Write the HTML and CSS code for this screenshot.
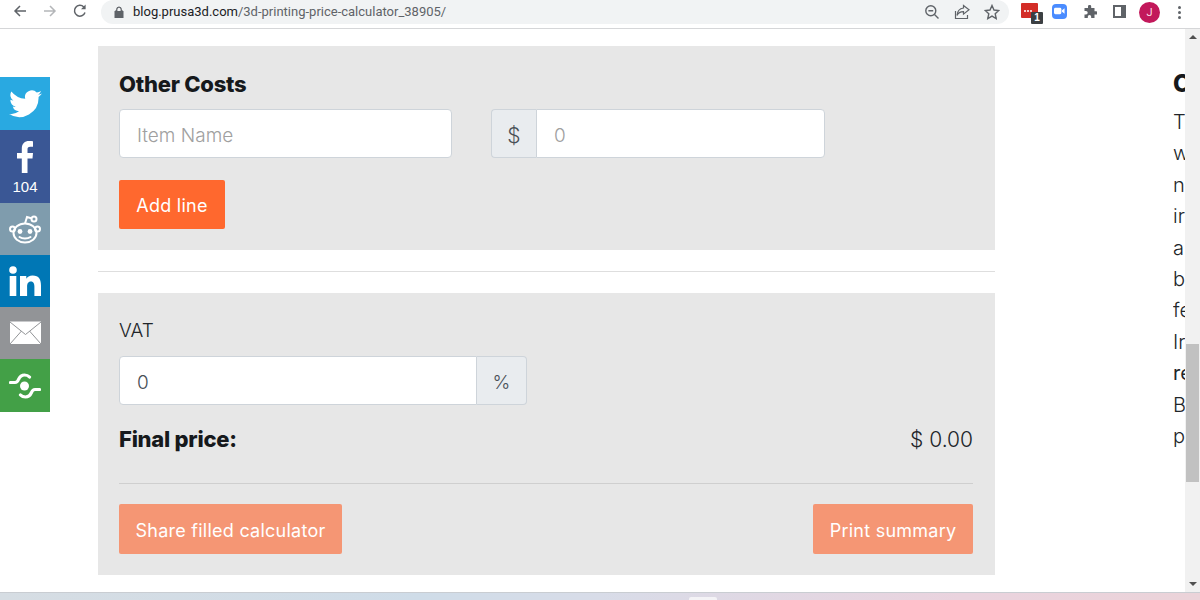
FILE: index.html
```html
<!DOCTYPE html>
<html lang="en">
<head>
<meta charset="utf-8">
<title>3D printing price calculator</title>
<link rel="stylesheet" href="styles.css">
</head>
<body>
<div class="window">
  <header class="toolbar">
    <div class="nav">
      <svg class="nav-icon" viewBox="0 0 16 16"><path d="M14 8H3M8 3 3 8l5 5" fill="none" stroke="#5f6368" stroke-width="1.5"/></svg>
      <svg class="nav-icon" viewBox="0 0 16 16"><path d="M2 8h11M8 3l5 5-5 5" fill="none" stroke="#b4b6b9" stroke-width="1.5"/></svg>
      <svg class="nav-icon" viewBox="0 0 16 16"><path d="M13 9.5A5.400 5.400 0 1 1 11.800 4" fill="none" stroke="#5f6368" stroke-width="1.5"/><path d="M13.600 1.600v4.600H9z" fill="#5f6368"/></svg>
    </div>
    <div class="omnibox">
      <svg class="lock" viewBox="0 0 10 12"><path d="M1 5h8v7H1zM2.600 5V3.400a2.400 2.400 0 0 1 4.800 0V5" fill="#5f6368" stroke="#5f6368"/><path d="M3.400 5V3.400a1.600 1.600 0 0 1 3.200 0V5z" fill="#f1f3f4"/></svg>
      <span class="url"><span class="host">blog.prusa3d.com</span>/3d-printing-price-calculator_38905/</span>
      <div class="omni-actions">
        <svg class="act" viewBox="0 0 16 16"><circle cx="6.800" cy="6.800" r="5" fill="none" stroke="#5f6368" stroke-width="1.400"/><path d="M4.400 6.800h4.800M10.500 10.500l4 4" stroke="#5f6368" stroke-width="1.400"/></svg>
        <svg class="act" viewBox="0 0 16 16"><path d="M1.500 7v7.500h12V11M9.500 1.500l5.500 4.300-5.500 4.300V7.600C6 7.600 4 9 3 11.500 3.300 7.500 5.500 4.500 9.500 4z" fill="none" stroke="#5f6368" stroke-width="1.200"/></svg>
        <svg class="act" viewBox="0 0 16 16"><path d="m8 1.500 2 4.500 4.800.5-3.600 3.200 1 4.800L8 12.100 3.800 14.500l1-4.800L1.200 6.500 6 6z" fill="none" stroke="#5f6368" stroke-width="1.400"/></svg>
      </div>
    </div>
    <div class="extensions">
      <div class="ext-pass"><i></i><i></i><i></i><span class="ext-badge">1</span></div>
      <div class="ext-zoom"><svg viewBox="0 0 12 8"><rect x="0" y="0.500" width="8" height="7" rx="1.500" fill="#fff"/><path d="m8.500 3.500 3-2.500v6l-3-2.500z" fill="#fff"/></svg></div>
      <svg class="ext-puzzle" viewBox="0 0 14 14"><path d="M5 1.500a1.600 1.600 0 0 1 3.200 0V3h3.300v3.200H13a1.700 1.700 0 0 1 0 3.400h-1.500V13H8.200v-1.300a1.700 1.700 0 0 0-3.400 0V13H1.500V9.500H3a1.700 1.700 0 0 0 0-3.400H1.500V3H5z" fill="#5f6368"/></svg>
      <div class="ext-panel"></div>
      <div class="avatar">J</div>
      <div class="kebab"><i></i><i></i><i></i></div>
    </div>
  </header>

  <div class="viewport">
    <nav class="social">
      <a class="s s-tw"><svg viewBox="0 0 24 20" width="33" height="28"><path d="M24 2.400a9.800 9.800 0 0 1-2.800.8A5 5 0 0 0 23.300.500a9.800 9.800 0 0 1-3.100 1.200 4.900 4.900 0 0 0-8.400 4.500A14 14 0 0 1 1.700.900a4.900 4.900 0 0 0 1.500 6.600 4.900 4.900 0 0 1-2.200-.6 4.900 4.900 0 0 0 3.900 4.900 4.900 4.900 0 0 1-2.200.1 4.900 4.900 0 0 0 4.600 3.400A9.900 9.900 0 0 1 0 17.300 14 14 0 0 0 21.500 4.900a10 10 0 0 0 2.500-2.500z" fill="#fff"/></svg></a>
      <a class="s s-fb"><svg viewBox="0 0 16 32" width="16" height="32"><path d="M10.500 32V17.500h5l.5-5.500h-5.500V8.500c0-1.600.5-2.700 2.800-2.700H16V.3C15.500.2 13.800 0 12 0 7.800 0 4.800 2.500 4.800 7.500V12H0v5.500h4.800V32z" fill="#fff"/></svg><span class="count">104</span></a>
      <a class="s s-rd"><svg viewBox="0 0 32 30" width="32" height="30"><g fill="none" stroke="#fff" stroke-width="2"><ellipse cx="16" cy="19" rx="11.500" ry="9.500"/><circle cx="3.500" cy="15" r="2.500"/><circle cx="28.500" cy="15" r="2.500"/><circle cx="25" cy="5" r="2.500"/><path d="M16 9.500l2-6.500 5 1.500"/><path d="M10.500 23c3 2 8 2 11 0" stroke-linecap="round"/></g><circle cx="11" cy="17.500" r="2.400" fill="#fff"/><circle cx="21" cy="17.500" r="2.400" fill="#fff"/></svg></a>
      <a class="s s-li"><svg viewBox="0 0 32 30" width="32" height="30"><g fill="#fff"><circle cx="4" cy="4" r="3.800"/><rect x="0.700" y="10" width="6.600" height="20"/><path d="M11 10h6.300v2.800c1-1.800 3.200-3.300 6.300-3.300 6.500 0 8.400 4 8.400 10V30h-6.600v-9.300c0-2.600-.6-5.300-3.500-5.300s-3.800 2.400-3.800 5.200V30H11z"/></g></svg></a>
      <a class="s s-ml"><svg viewBox="0 0 32 24" width="33" height="24"><path d="M.5.500h31V23H.5z" fill="#fff"/><path d="M0.500 1 16 13.500 31.500 1M.5 23l11.500-13M31.500 23 20 10" fill="none" stroke="#929497" stroke-width="1"/></svg></a>
      <a class="s s-mr"><svg viewBox="0 0 32 26" width="32" height="26"><circle cx="15.500" cy="13" r="4.500" fill="#fff"/><path d="M1.500 9.500h4.500c2 0 2.700-1 3.500-3 1.200-2.700 3.200-4.500 6-4.500 2.200 0 3.800.7 5 2M30.500 16.500H26c-2 0-2.700 1-3.500 3-1.200 2.700-3.200 4.500-6 4.500-2.200 0-3.800-.7-5-2" fill="none" stroke="#fff" stroke-width="3.200" stroke-linecap="round"/></svg></a>
    </nav>

    <main class="page">
      <div class="center">
        <section class="panel panel-costs">
          <h2 class="title">Other Costs</h2>
          <div class="cost-row">
            <div class="field field-name"><span class="placeholder">Item Name</span></div>
            <div class="money">
              <span class="addon addon-left">$</span>
              <div class="field field-amount"><span class="placeholder">0</span></div>
            </div>
          </div>
          <button class="btn btn-solid">Add line</button>
        </section>
        <hr class="divider">
        <section class="panel panel-total">
          <label class="label">VAT</label>
          <div class="vat">
            <div class="field field-vat"><span class="value">0</span></div>
            <span class="addon addon-right">%</span>
          </div>
          <div class="final">
            <strong class="final-label">Final price:</strong>
            <span class="final-value">$ 0.00</span>
          </div>
          <hr class="rule">
          <div class="actions">
            <button class="btn btn-muted btn-share">Share filled calculator</button>
            <button class="btn btn-muted btn-print">Print summary</button>
          </div>
        </section>
      </div>
      <aside class="article">
        <h2 class="article-title">C</h2>
        <p>T</p>
        <p>w</p>
        <p>n</p>
        <p>ir</p>
        <p>a</p>
        <p>b</p>
        <p>fe</p>
        <p>Ir</p>
        <p><b>re</b></p>
        <p>B</p>
        <p>p</p>
      </aside>
    </main>

    <div class="scrollbar">
      <span class="arrow-up"></span>
      <div class="track"><div class="thumb"></div></div>
      <span class="arrow-down"></span>
    </div>
  </div>
  <footer class="taskbar"><span class="task-tab"></span></footer>
</div>
</body>
</html>
```
FILE: styles.css
```css
* { box-sizing: border-box; }
html, body { margin: 0; height: 100%; overflow: hidden; background: #fff; }
body { font-family: Inter, "Liberation Sans", sans-serif; color: #212529; }
.window { width: 1200px; height: 600px; display: flex; flex-direction: column; }

.toolbar { height: 29px; flex: none; display: flex; align-items: flex-start; background: #fff; border-bottom: 1px solid #d5d6d8; }
.nav { width: 101px; flex: none; display: flex; gap: 14px; padding: 3px 0 0 12px; }
.nav-icon { width: 16px; height: 16px; }
.omnibox { width: 908px; height: 24px; flex: none; background: #f1f3f4; border-radius: 12px; display: flex; align-items: center; padding-left: 13px; }
.lock { width: 10px; height: 12px; flex: none; }
.url { margin-left: 9px; font: 13px/20px Roboto, "Liberation Sans", sans-serif; color: #5f6368; }
.host { color: #202124; }
.omni-actions { margin-left: auto; display: flex; gap: 14px; padding-right: 9px; align-items: center; }
.act { width: 16px; height: 16px; }
.extensions { flex: 1; display: flex; align-items: center; height: 24px; padding-left: 12px; }
.ext-pass { position: relative; width: 17px; height: 15px; background: #d32d27; border-radius: 1px; margin-top: -3px; display: flex; align-items: center; justify-content: center; gap: 1px; padding-right: 3px; }
.ext-pass i { display: block; width: 2px; height: 2px; border-radius: 50%; background: #fff; }
.ext-badge { position: absolute; left: 10px; top: 9px; width: 12px; height: 12px; background: #3c4043; border-radius: 1px; color: #fff; font: 700 10px/12px "Liberation Sans", sans-serif; text-align: center; }
.ext-zoom { width: 15px; height: 15px; margin-left: 14px; margin-top: -2px; background: #4a8cff; border-radius: 4px; display: flex; align-items: center; justify-content: center; }
.ext-zoom svg { width: 11px; height: 8px; }
.ext-puzzle { width: 14px; height: 14px; margin-left: 16px; margin-top: -1px; }
.ext-panel { width: 13px; height: 13px; margin-left: 16px; margin-top: -1px; border: 2px solid #5f6368; border-right-width: 5px; }
.avatar { width: 21px; height: 21px; margin-left: 13px; border-radius: 50%; background: #c2185b; color: #fbdde8; font: 11px/21px Roboto, sans-serif; text-align: center; }
.kebab { margin-left: 18px; display: flex; flex-direction: column; gap: 2px; }
.kebab i { display: block; width: 3px; height: 3px; border-radius: 50%; background: #5f6368; }

.viewport { flex: 1; min-height: 0; display: flex; position: relative; }
.page { flex: 1; min-width: 0; display: flex; overflow: hidden; padding-top: 17px; }
.center { width: 897px; margin-left: 98px; flex: none; }
.panel { background: #e7e7e7; padding: 0 22px 0 21px; }
.panel-costs { height: 204px; padding-top: 25px; }
.title { margin: 0; font-size: 22px; line-height: 27px; font-weight: 800; color: #16191c; letter-spacing: -.25px; }
.cost-row { display: flex; margin-top: 11px; gap: 39px; }
.field { height: 49px; background: #fff; border: 1px solid #ced4da; border-radius: 4px; display: flex; align-items: center; padding: 4px 0 0 17px; font-size: 19px; font-weight: 300; }
.field-name { width: 333px; }
.placeholder { color: #a0a0a0; }
.value { color: #495057; }
.money { display: flex; }
.addon { display: flex; align-items: center; justify-content: center; height: 49px; padding-top: 3px; background: #e9ecef; border: 1px solid #ced4da; font-size: 19px; font-weight: 300; color: #495057; }
.addon-left { width: 45px; border-radius: 4px 0 0 4px; border-right: 0; font-size: 21px; }
.field-amount { width: 288.5px; border-radius: 0 4px 4px 0; }
.btn { border: 0; color: #fff; font-family: inherit; font-size: 18px; letter-spacing: .25px; height: 50px; border-radius: 2px; padding: 3px 0 0; display: block; }
.btn-solid { margin-top: 22px; width: 106px; height: 49px; background: #ff682e; padding-top: 1px; }
.divider { margin: 21px 0 21px; border: 0; border-top: 1px solid #dedede; }
.panel-total { height: 282px; padding-top: 26px; }
.label { display: block; font-size: 19px; font-weight: 300; line-height: 24px; color: #212529; }
.vat { display: flex; margin-top: 13px; }
.field-vat { width: 358px; border-radius: 4px 0 0 4px; }
.addon-right { width: 50px; border-radius: 0 4px 4px 0; border-left: 0; }
.final { display: flex; justify-content: space-between; align-items: center; margin-top: 20px; height: 28px; }
.final-label { font-size: 22px; font-weight: 800; color: #16191c; letter-spacing: -.25px; }
.final-value { font-size: 21px; font-weight: 300; color: #212529; }
.rule { margin: 30px 0 20px; border: 0; border-top: 1px solid #cfcfcf; }
.actions { display: flex; justify-content: space-between; }
.btn-muted { background: #f59674; }
.btn-share { width: 223px; }
.btn-print { width: 160px; }

.article { margin-left: 178px; width: 12px; flex: none; overflow: hidden; white-space: nowrap; padding-top: 23px; }
.article-title { margin: 0 0 8px; font-size: 24px; line-height: 30px; font-weight: 800; color: #16191c; }
.article p { margin: 0; font-size: 20px; font-weight: 300; line-height: 31.4px; color: #212529; }

.scrollbar { width: 15px; flex: none; background: #f1f1f1; display: flex; flex-direction: column; align-items: center; }
.arrow-up { margin-top: 6px; width: 0; height: 0; border: 4px solid transparent; border-top: 0; border-bottom-color: #505050; }
.track { flex: 1; width: 100%; padding-top: 305px; }
.thumb { margin-left: 1px; width: 13px; height: 138px; background: #c1c1c1; }
.arrow-down { margin-bottom: 6px; width: 0; height: 0; border: 4px solid transparent; border-bottom: 0; border-top-color: #505050; }

.taskbar { height: 8px; flex: none; display: flex; justify-content: center; align-items: flex-end; background: linear-gradient(90deg, #d6dde3 0%, #cfdce8 35%, #d8dce8 50%, #ead3de 80%, #ebd3d9 100%); border-top: 1px solid #c9cdd2; }
.task-tab { width: 28px; height: 3px; margin-left: 205px; background: #f4f3f6; border-radius: 2px 2px 0 0; }

.social { position: absolute; left: 0; top: 48px; width: 50px; display: flex; flex-direction: column; z-index: 2; }
.s { display: flex; flex-direction: column; align-items: center; justify-content: center; color: #fff; }
.s-tw { height: 53px; background: #29a9e1; }
.s-fb { height: 73px; background: #3a5795; justify-content: flex-start; padding-top: 11px; }
.count { font: 15px/18px "Liberation Sans", sans-serif; margin-top: 5px; }
.s-rd { height: 52px; background: #7f9cad; }
.s-li { height: 52px; background: #0077b5; }
.s-ml { height: 52px; background: #929497; }
.s-mr { height: 53px; background: #43a047; }
```
